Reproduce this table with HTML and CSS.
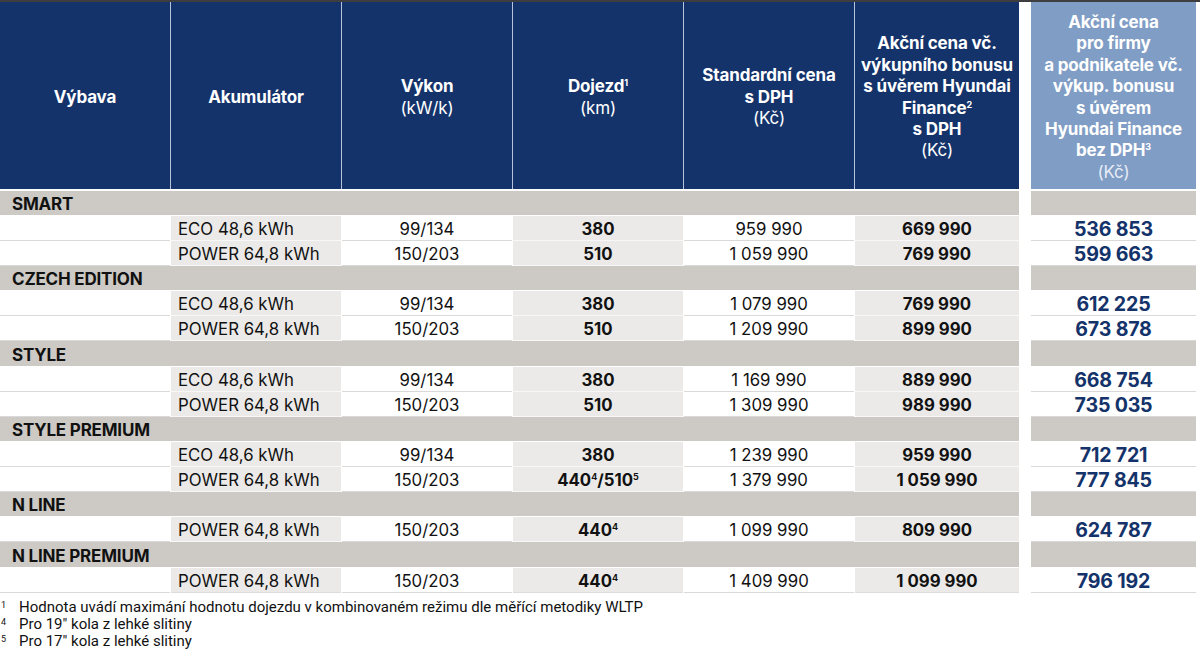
FILE: index.html
```html
<!DOCTYPE html>
<html lang="cs">
<head>
<meta charset="utf-8">
<title>Ceník</title>
<link rel="stylesheet" href="styles.css">
</head>
<body>
<div class="topbar"></div>
<div class="row head">
  <div class="left">
    <div class="hc"><b>Výbava</b></div>
    <div class="hc"><b>Akumulátor</b></div>
    <div class="hc"><b>Výkon</b><span>(kW/k)</span></div>
    <div class="hc"><b>Dojezd<sup>1</sup></b><span>(km)</span></div>
    <div class="hc"><b>Standardní cena</b><b>s DPH</b><span>(Kč)</span></div>
    <div class="hc"><b>Akční cena vč.</b><b>výkupního bonusu</b><b>s úvěrem Hyundai</b><b>Finance<sup>2</sup></b><b>s DPH</b><span>(Kč)</span></div>
  </div>
  <div class="right hc light"><b>Akční cena</b><b>pro firmy</b><b>a podnikatele vč.</b><b>výkup. bonusu</b><b>s úvěrem</b><b>Hyundai Finance</b><b>bez DPH<sup>3</sup></b><span>(Kč)</span></div>
</div>
<div class="body">
  <div class="row group"><div class="left">SMART</div><div class="right"></div></div>
  <div class="row data"><div class="left"><div class="c w"></div><div class="c g acc">ECO 48,6 kWh</div><div class="c w">99/134</div><div class="c g b">380</div><div class="c w">959 990</div><div class="c g b">669 990</div></div><div class="right c w price">536 853</div></div>
  <div class="row data"><div class="left"><div class="c w"></div><div class="c g acc">POWER 64,8 kWh</div><div class="c w">150/203</div><div class="c g b">510</div><div class="c w">1 059 990</div><div class="c g b">769 990</div></div><div class="right c w price">599 663</div></div>

  <div class="row group"><div class="left">CZECH EDITION</div><div class="right"></div></div>
  <div class="row data"><div class="left"><div class="c w"></div><div class="c g acc">ECO 48,6 kWh</div><div class="c w">99/134</div><div class="c g b">380</div><div class="c w">1 079 990</div><div class="c g b">769 990</div></div><div class="right c w price">612 225</div></div>
  <div class="row data"><div class="left"><div class="c w"></div><div class="c g acc">POWER 64,8 kWh</div><div class="c w">150/203</div><div class="c g b">510</div><div class="c w">1 209 990</div><div class="c g b">899 990</div></div><div class="right c w price">673 878</div></div>

  <div class="row group tall"><div class="left">STYLE</div><div class="right"></div></div>
  <div class="row data"><div class="left"><div class="c w"></div><div class="c g acc">ECO 48,6 kWh</div><div class="c w">99/134</div><div class="c g b">380</div><div class="c w">1 169 990</div><div class="c g b">889 990</div></div><div class="right c w price">668 754</div></div>
  <div class="row data"><div class="left"><div class="c w"></div><div class="c g acc">POWER 64,8 kWh</div><div class="c w">150/203</div><div class="c g b">510</div><div class="c w">1 309 990</div><div class="c g b">989 990</div></div><div class="right c w price">735 035</div></div>

  <div class="row group"><div class="left">STYLE PREMIUM</div><div class="right"></div></div>
  <div class="row data"><div class="left"><div class="c w"></div><div class="c g acc">ECO 48,6 kWh</div><div class="c w">99/134</div><div class="c g b">380</div><div class="c w">1 239 990</div><div class="c g b">959 990</div></div><div class="right c w price">712 721</div></div>
  <div class="row data"><div class="left"><div class="c w"></div><div class="c g acc">POWER 64,8 kWh</div><div class="c w">150/203</div><div class="c g b">440<sup>4</sup>/510<sup>5</sup></div><div class="c w">1 379 990</div><div class="c g b">1 059 990</div></div><div class="right c w price">777 845</div></div>

  <div class="row group"><div class="left">N LINE</div><div class="right"></div></div>
  <div class="row data"><div class="left"><div class="c w"></div><div class="c g acc">POWER 64,8 kWh</div><div class="c w">150/203</div><div class="c g b">440<sup>4</sup></div><div class="c w">1 099 990</div><div class="c g b">809 990</div></div><div class="right c w price">624 787</div></div>

  <div class="row group tall"><div class="left">N LINE PREMIUM</div><div class="right"></div></div>
  <div class="row data last"><div class="left"><div class="c w"></div><div class="c g acc">POWER 64,8 kWh</div><div class="c w">150/203</div><div class="c g b">440<sup>4</sup></div><div class="c w">1 409 990</div><div class="c g b">1 099 990</div></div><div class="right c w price">796 192</div></div>
</div>
<div class="notes">
  <div class="note"><span class="n">1</span><span>Hodnota uvádí maximání hodnotu dojezdu v kombinovaném režimu dle měřící metodiky WLTP</span></div>
  <div class="note"><span class="n">4</span><span>Pro 19" kola z lehké slitiny</span></div>
  <div class="note"><span class="n">5</span><span>Pro 17" kola z lehké slitiny</span></div>
</div>
</body>
</html>
```
FILE: styles.css
```css
html, body {
  margin: 0;
  padding: 0;
  background: #ffffff;
}
body {
  font-family: Inter, "Noto Sans", "Liberation Sans", sans-serif;
  color: #111111;
  width: 1200px;
}
.topbar {
  height: 2px;
  background: #3e3e40;
}
.row {
  display: flex;
  width: 1196px;
}
.left {
  width: 1019px;
  display: grid;
  grid-template-columns: 170px 170px 170px 170px 170px 164px;
  column-gap: 1px;
}
.right {
  width: 165px;
  margin-left: 12px;
}
.head {
  height: 187px;
  border-bottom: 2px solid #ffffff;
}
.head .left {
  background: #b7c3da;
}
.hc {
  background: #14336a;
  color: #ffffff;
  display: flex;
  flex-direction: column;
  align-items: center;
  justify-content: center;
  text-align: center;
  font-size: 17px;
  line-height: 21.4px;
  letter-spacing: -0.15px;
  padding-top: 4px;
  box-sizing: border-box;
}
.hc b {
  font-weight: 700;
  white-space: nowrap;
}
.hc span {
  font-weight: 400;
}
.hc.light {
  background: #809dc5;
}
.hc.light span {
  color: #e6ecf5;
}
.hc sup, .c sup {
  font-size: 9px;
  line-height: 0;
  vertical-align: 6px;
}
.group {
  height: 24px;
  border-bottom: 1px solid #ffffff;
}
.group.tall {
  height: 25px;
}
.group .left {
  display: block;
  background: #cdc9c5;
  font-weight: 700;
  font-size: 17px;
  line-height: 27px;
  padding-left: 12px;
  box-sizing: border-box;
  letter-spacing: -0.2px;
}
.group.tall .left {
  line-height: 29px;
}
.group .right {
  background: #cdc9c5;
}
.data {
  height: 25px;
}
.c {
  height: 25px;
  box-sizing: border-box;
  font-size: 16.8px;
  line-height: 26px;
  text-align: center;
  white-space: nowrap;
}
.c.w {
  background: #ffffff;
  border-bottom: 1px solid #d9d9d9;
}
.c.g {
  background: #ebeae8;
  border-bottom: 1px solid #f7f7f7;
}
.data.last .c.g {
  border-bottom: 1px solid #dcdcdc;
}
.c.acc {
  text-align: left;
  padding-left: 7px;
}
.c.b {
  font-weight: 700;
}
.c.price {
  font-weight: 700;
  font-size: 19.6px;
  color: #14336a;
  line-height: 27px;
  letter-spacing: -0.2px;
}
.notes {
  padding-top: 6px;
  font-size: 15px;
  line-height: 17px;
  color: #111111;
  font-family: Roboto, "Liberation Sans", sans-serif;
}
.note {
  display: flex;
}
.note .n {
  width: 19px;
  font-size: 9px;
  line-height: 12px;
  padding-left: 1px;
  box-sizing: border-box;
}
```
